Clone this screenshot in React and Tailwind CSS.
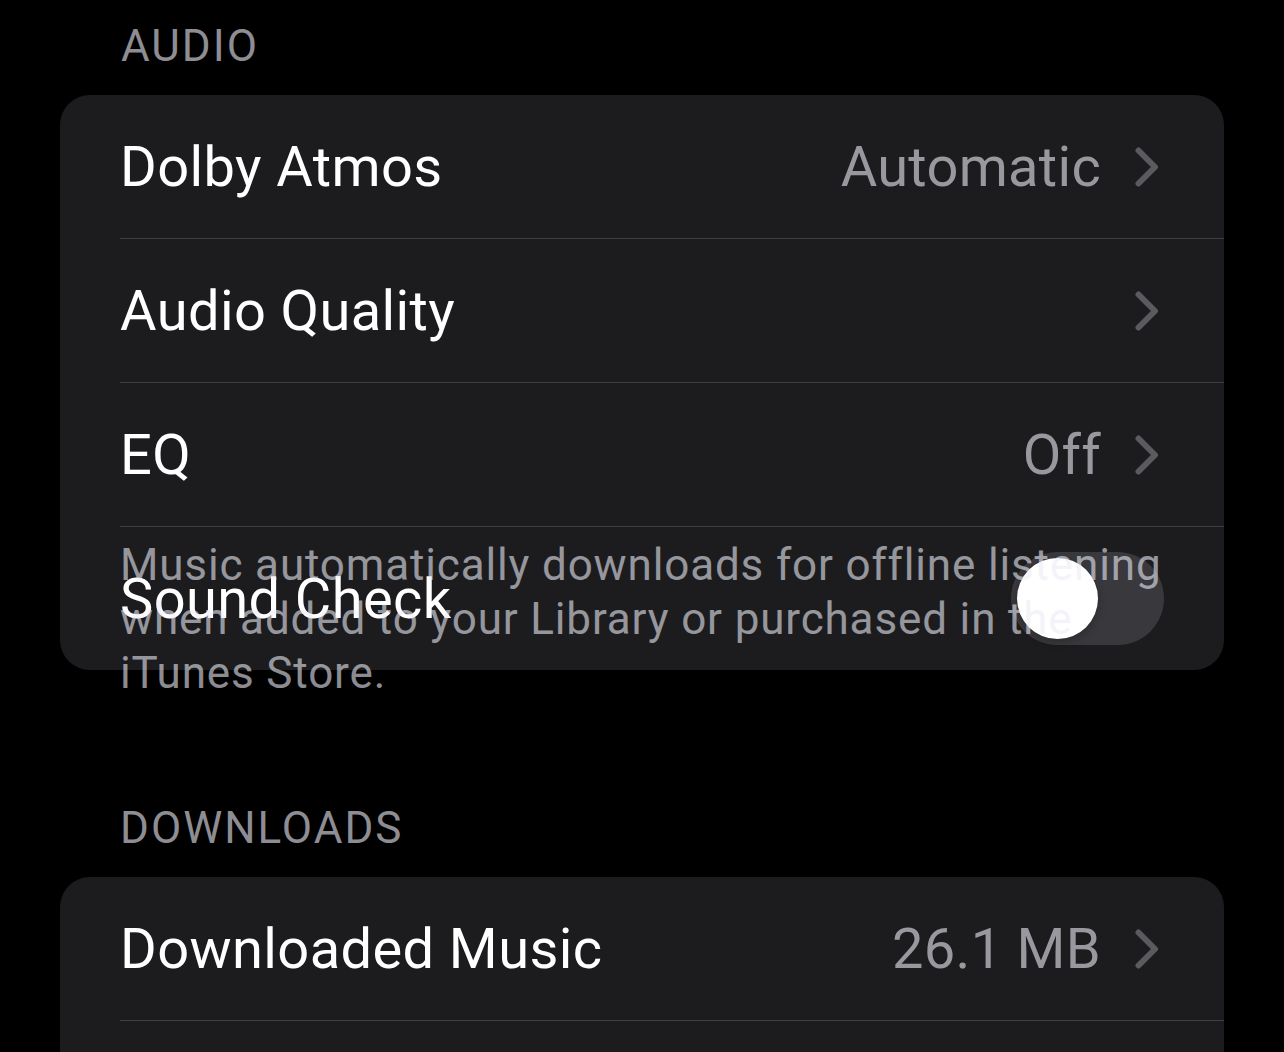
const FONT = { fontFamily: 'Roboto, "Noto Sans", sans-serif' };

const Chevron = () => (
  <svg width="24" height="40" viewBox="0 0 24 40" className="mr-[5px] shrink-0">
    <path d="M3.5 3.5 L20 20 L3.5 36.5" fill="none" stroke="#5a5a5f" strokeWidth="6" strokeLinecap="round" strokeLinejoin="round" />
  </svg>
);

const Toggle = () => (
  <div className="flex h-[93px] w-[153px] shrink-0 items-center rounded-full bg-[#39393d] pl-[6px]">
    <div className="h-[81px] w-[81px] rounded-full bg-white shadow-[0_3px_8px_rgba(0,0,0,0.25)]" />
  </div>
);

const Row = ({ label, value, chevron, toggle, last }) => (
  <div>
    <div className="flex h-[143px] items-center justify-between pl-[60px] pr-[60px]">
      <span className="text-[56px] tracking-[0.4px] text-white">{label}</span>
      <div className="flex items-center gap-[34px]">
        {value && <span className="text-[56px] tracking-[0.3px] text-[#98989e]">{value}</span>}
        {chevron && <Chevron />}
        {toggle && <Toggle />}
      </div>
    </div>
    {!last && <div className="ml-[60px] h-px bg-[#3f3f42]" />}
  </div>
);

const Header = ({ children, className = '' }) => (
  <div className={`text-[44px] leading-[54px] tracking-[2px] text-[#8d8d93] ${className}`}>{children}</div>
);

export default function App() {
  return (
    <div className="min-h-screen overflow-hidden bg-black" style={FONT}>
      <Header className="pl-[121px] pt-[19px]">AUDIO</Header>
      <div className="mx-[60px] mt-[22px] rounded-[30px] bg-[#1c1c1e]">
        <Row label="Dolby Atmos" value="Automatic" chevron />
        <Row label="Audio Quality" chevron />
        <Row label="EQ" value="Off" chevron />
        <Row label="Sound Check" toggle last />
      </div>
      <p className="relative mt-[-132px] pl-[120px] text-[44px] leading-[54px] tracking-[0.85px] text-[#ebebf5]/60">
        Music automatically downloads for offline listening
        <br />
        when added to your Library or purchased in the
        <br />
        iTunes Store.
      </p>

      <Header className="mt-[101px] pl-[120px]">DOWNLOADS</Header>
      <div className="mx-[60px] mt-[22px] rounded-[30px] bg-[#1c1c1e]">
        <Row label="Downloaded Music" value="26.1 MB" chevron />
        <Row label="Optimize Storage" value="Off" chevron last />
      </div>
    </div>
  );
}
